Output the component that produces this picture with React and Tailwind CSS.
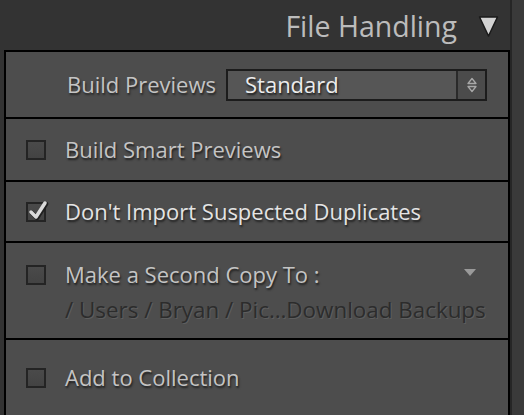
import React from "react";

const font = { fontFamily: '"Open Sans", "Liberation Sans", sans-serif' };

const Checkbox = ({ checked }) => (
  <div className="relative w-[20px] h-[20px] shrink-0 border-2 border-[#242424] bg-gradient-to-b from-[#4a4a4a] to-[#434343]">
    {checked && (
      <svg className="absolute left-[0px] top-[-5px]" width="22" height="22" viewBox="0 0 22 22">
        <path d="M3 13 L8 18 L17 4" fill="none" stroke="#202020" strokeWidth="4.5" strokeLinecap="round" strokeLinejoin="round" transform="translate(1 1)" />
        <path d="M3 13 L8 18 L17 4" fill="none" stroke="#dadada" strokeWidth="3.5" strokeLinecap="round" strokeLinejoin="round" />
      </svg>
    )}
  </div>
);

const CheckRow = ({ label, checked, bright, h }) => (
  <div className={`flex items-center gap-[19px] pl-[20px] bg-[#4d4d4d] ${h}`}>
    <Checkbox checked={checked} />
    <span className={`text-[22px] [text-shadow:1px_2px_2px_#1f1f1f] ${bright ? "text-[#e4e4e4]" : "text-[#c4c4c4]"}`}>
      {label}
    </span>
  </div>
);

export default function App() {
  return (
    <div className="w-[524px] h-[415px] overflow-hidden bg-[#333333] flex" style={font}>
      <div className="w-[510px] shrink-0 flex flex-col">
        <div className="h-[50px] shrink-0 flex items-center justify-end gap-[21px] pr-[11px] pt-[2px]">
          <span className="text-[28.5px] text-[#bcbcbc]">File Handling</span>
          <svg width="21" height="23" viewBox="0 0 21 23">
            <path d="M1.5 2 L19.5 2 L10.5 21 Z" fill="#d2d2d2" stroke="#1a1a1a" strokeWidth="1.5" strokeLinejoin="round" />
          </svg>
        </div>
        <div className="ml-[4px] flex-1 border-2 border-b-0 border-black flex flex-col gap-[2px] bg-black">
          <div className="h-[65px] shrink-0 bg-[#4d4d4d] flex items-center pl-[61px] gap-[10px]">
            <span className="text-[22px] text-[#c4c4c4] [text-shadow:1px_2px_2px_#262626]">Build Previews</span>
            <div className="w-[261px] h-[32px] border-2 border-[#1c1c1c] flex">
              <div className="flex-1 bg-[#565656] flex items-center pl-[17px] border-r-2 border-[#2a2a2a]">
                <span className="text-[22px] text-[#ececec] [text-shadow:1px_2px_2px_#1a1a1a]">Standard</span>
              </div>
              <div className="w-[27px] bg-[#4b4b4b] flex items-center justify-center">
                <svg width="12" height="16" viewBox="0 0 12 16">
                  <path d="M2 6.5 L6 1.5 L10 6.5 Z" fill="none" stroke="#a8a8a8" strokeWidth="1.3" strokeLinejoin="round" />
                  <path d="M2 9.5 L6 14.5 L10 9.5 Z" fill="none" stroke="#a8a8a8" strokeWidth="1.3" strokeLinejoin="round" />
                </svg>
              </div>
            </div>
          </div>
          <CheckRow label="Build Smart Previews" h="h-[61px]" />
          <CheckRow label="Don't Import Suspected Duplicates" checked bright h="h-[59px]" />
          <div className="h-[95px] shrink-0 bg-[#4d4d4d] flex flex-col pl-[20px] pr-[20px] pt-[15px]">
            <div className="flex items-center gap-[19px]">
              <Checkbox />
              <span className="flex-1 text-[22px] text-[#c4c4c4] [text-shadow:1px_2px_2px_#1f1f1f]">Make a Second Copy To :</span>
              <svg className="mr-[12px] mb-[4px]" width="12" height="8" viewBox="0 0 12 8">
                <path d="M0 0 L12 0 L6 7 Z" fill="#9a9a9a" />
              </svg>
            </div>
            <div className="pl-[39px] pt-[2px] text-[22.4px] text-[#2c2c2c] [text-shadow:1px_1px_0_#5e5e5e] whitespace-nowrap">
              / Users / Bryan / Pic…Download Backups
            </div>
          </div>
          <CheckRow label="Add to Collection" h="flex-1" />
        </div>
      </div>
      <div className="w-[2px] shrink-0 bg-[#262626]" />
      <div className="flex-1 bg-[#3a3a3a]" />
    </div>
  );
}
